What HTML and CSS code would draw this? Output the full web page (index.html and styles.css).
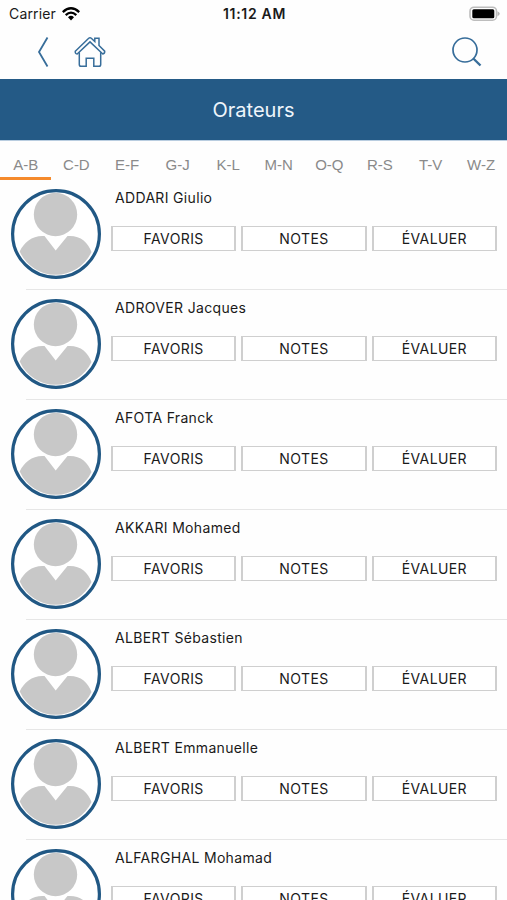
FILE: index.html
```html
<!DOCTYPE html>
<html lang="fr">
<head>
<meta charset="utf-8">
<title>Orateurs</title>
<link rel="stylesheet" href="styles.css">
</head>
<body>
<svg class="defs" aria-hidden="true">
  <symbol id="avatar" viewBox="0 0 90 90">
    <circle cx="45" cy="45" r="43.4" fill="#fff"/>
    <g fill="#c8c8c8">
      <circle cx="44.5" cy="25.500" r="21.700"/>
      <path d="M8.700 62.500C13 53 22 46 33.500 47L44.700 61.500L56.500 47C69 46 77 53 80.500 63A39.500 39.500 0 0 1 8.700 62.500Z"/>
    </g>
    <circle cx="45" cy="45" r="43.400" fill="none" stroke="#215884" stroke-width="3.200"/>
  </symbol>
</svg>
<div class="screen">
  <header class="status">
    <div class="carrier"><span>Carrier</span>
      <svg width="18" height="14" viewBox="0 0 18 14" fill="none" stroke="#000" stroke-width="2.300"><path d="M.8 5.100Q9-2.500 17.200 5.100M3.700 8.100Q9 3.200 14.300 8.100"/><path d="M6 10.200Q9 7.500 12 10.200L9 13.400Z" fill="#000" stroke="none"/></svg>
    </div>
    <div class="time">11:12 AM</div>
    <svg class="battery" width="32" height="16" viewBox="0 0 32 16"><rect x="1" y="1.200" width="26.500" height="13" rx="4" fill="#fff" stroke="#bdbdbd" stroke-width="1.600"/><rect x="3.300" y="3.200" width="22" height="9" rx="1.500"/><path d="M28.500 5.200Q33 7.700 28.500 10.200Z" fill="#b5b5b5"/></svg>
  </header>
  <nav class="toolbar">
    <svg class="back" width="12" height="32" viewBox="0 0 12 32"><path d="M10.500 1.500L2 16L10.500 30.500"/></svg>
    <svg class="home" width="32" height="32" viewBox="0 0 32 32"><path d="M1.300 15.200L14.700 2.300Q16 1.200 17.300 2.300L20.800 5.500V2.200H25V9.500L30.700 15.200Q31 17.500 28.800 18L16 5.900L3.200 18Q.8 17.500 1.300 15.200Z"/><path d="M5.300 16.200V28.500Q5.300 30.300 7 30.300H12.200V22.300H19.800V30.300H25Q26.700 30.300 26.700 28.500V16.200"/></svg>
    <svg class="search" width="32" height="32" viewBox="0 0 32 32"><circle cx="14" cy="14" r="12"/><path d="M22.300 22.500L29.500 29.500" stroke-width="2.400"/></svg>
  </nav>
  <h1 class="title">Orateurs</h1>
  <div class="tabs">
    <span class="tab active">A-B</span><span class="tab">C-D</span><span class="tab">E-F</span><span class="tab">G-J</span><span class="tab">K-L</span><span class="tab">M-N</span><span class="tab">O-Q</span><span class="tab">R-S</span><span class="tab">T-V</span><span class="tab">W-Z</span>
  </div>
  <main class="list">
    <article class="row"><svg class="avatar"><use href="#avatar"/></svg><div class="info"><h2>ADDARI Giulio</h2><div class="actions"><button>FAVORIS</button><button>NOTES</button><button>ÉVALUER</button></div></div></article>
    <article class="row"><svg class="avatar"><use href="#avatar"/></svg><div class="info"><h2>ADROVER Jacques</h2><div class="actions"><button>FAVORIS</button><button>NOTES</button><button>ÉVALUER</button></div></div></article>
    <article class="row"><svg class="avatar"><use href="#avatar"/></svg><div class="info"><h2>AFOTA Franck</h2><div class="actions"><button>FAVORIS</button><button>NOTES</button><button>ÉVALUER</button></div></div></article>
    <article class="row"><svg class="avatar"><use href="#avatar"/></svg><div class="info"><h2>AKKARI Mohamed</h2><div class="actions"><button>FAVORIS</button><button>NOTES</button><button>ÉVALUER</button></div></div></article>
    <article class="row"><svg class="avatar"><use href="#avatar"/></svg><div class="info"><h2>ALBERT Sébastien</h2><div class="actions"><button>FAVORIS</button><button>NOTES</button><button>ÉVALUER</button></div></div></article>
    <article class="row"><svg class="avatar"><use href="#avatar"/></svg><div class="info"><h2>ALBERT Emmanuelle</h2><div class="actions"><button>FAVORIS</button><button>NOTES</button><button>ÉVALUER</button></div></div></article>
    <article class="row"><svg class="avatar"><use href="#avatar"/></svg><div class="info"><h2>ALFARGHAL Mohamad</h2><div class="actions"><button>FAVORIS</button><button>NOTES</button><button>ÉVALUER</button></div></div></article>
  </main>
</div>
</body>
</html>
```
FILE: styles.css
```css
* { box-sizing: border-box; }
body { margin: 0; background: #fefefe; color: #1a1a1a; font-family: Inter, "Liberation Sans", sans-serif; }
.defs { display: none; }
.screen { display: flex; flex-direction: column; height: 900px; overflow: hidden; }
.status { display: grid; grid-template-columns: 1fr auto 1fr; align-items: center; height: 27px; padding: 0 6px 0 9px; flex: none; }
.carrier { display: flex; align-items: center; gap: 6px; font-size: 14px; line-height: 18px; letter-spacing: .15px; }
.time { font-size: 14px; font-weight: 600; line-height: 18px; letter-spacing: .7px; margin-left: -1px; }
.battery { justify-self: end; }
.toolbar { display: flex; align-items: center; height: 52px; padding: 0 24px 2px 37px; flex: none; }
.toolbar svg { fill: none; stroke: #376d9a; stroke-width: 1.5; }
.toolbar .back { stroke-width: 1.8; }
.home { margin-left: 25px; }
.toolbar .search { margin-left: auto; stroke-width: 1.7; }
.title { margin: 0; height: 62px; flex: none; background: #245a86; border-bottom: 1px solid #b9cde0; color: #eef5fb; font-size: 20px; font-weight: 400; line-height: 62px; text-align: center; }
.tabs { display: grid; grid-template-columns: repeat(10, 50.6px); height: 39px; flex: none; }
.tab { height: 39px; padding: 0 0 0 1px; font: 15px/47px "Liberation Sans", Arial, sans-serif; color: #8a8a8a; text-align: center; white-space: nowrap; }
.tab.active { border-bottom: 3px solid #f58a2c; }
.row { display: flex; gap: 10px; height: 110px; padding: 9px 10px 0 11px; background: linear-gradient(#e6e6e6, #e6e6e6) 26px 109px / 100% 1px no-repeat; }
.avatar { width: 90px; height: 90px; flex: none; }
.info { flex: 1; }
h2 { margin: 0 0 0 4px; font-size: 14px; font-weight: 400; line-height: 18px; letter-spacing: .33px; }
.actions { display: grid; grid-template-columns: repeat(3, 1fr); gap: 5px; margin-top: 19px; }
button { height: 25px; padding: 0; border: 1px solid #cfcfcf; border-width: 1px 2px; border-radius: 0; background: #fff; color: #1a1a1a; font: 14px/22px Inter, sans-serif; letter-spacing: .4px; }
```
